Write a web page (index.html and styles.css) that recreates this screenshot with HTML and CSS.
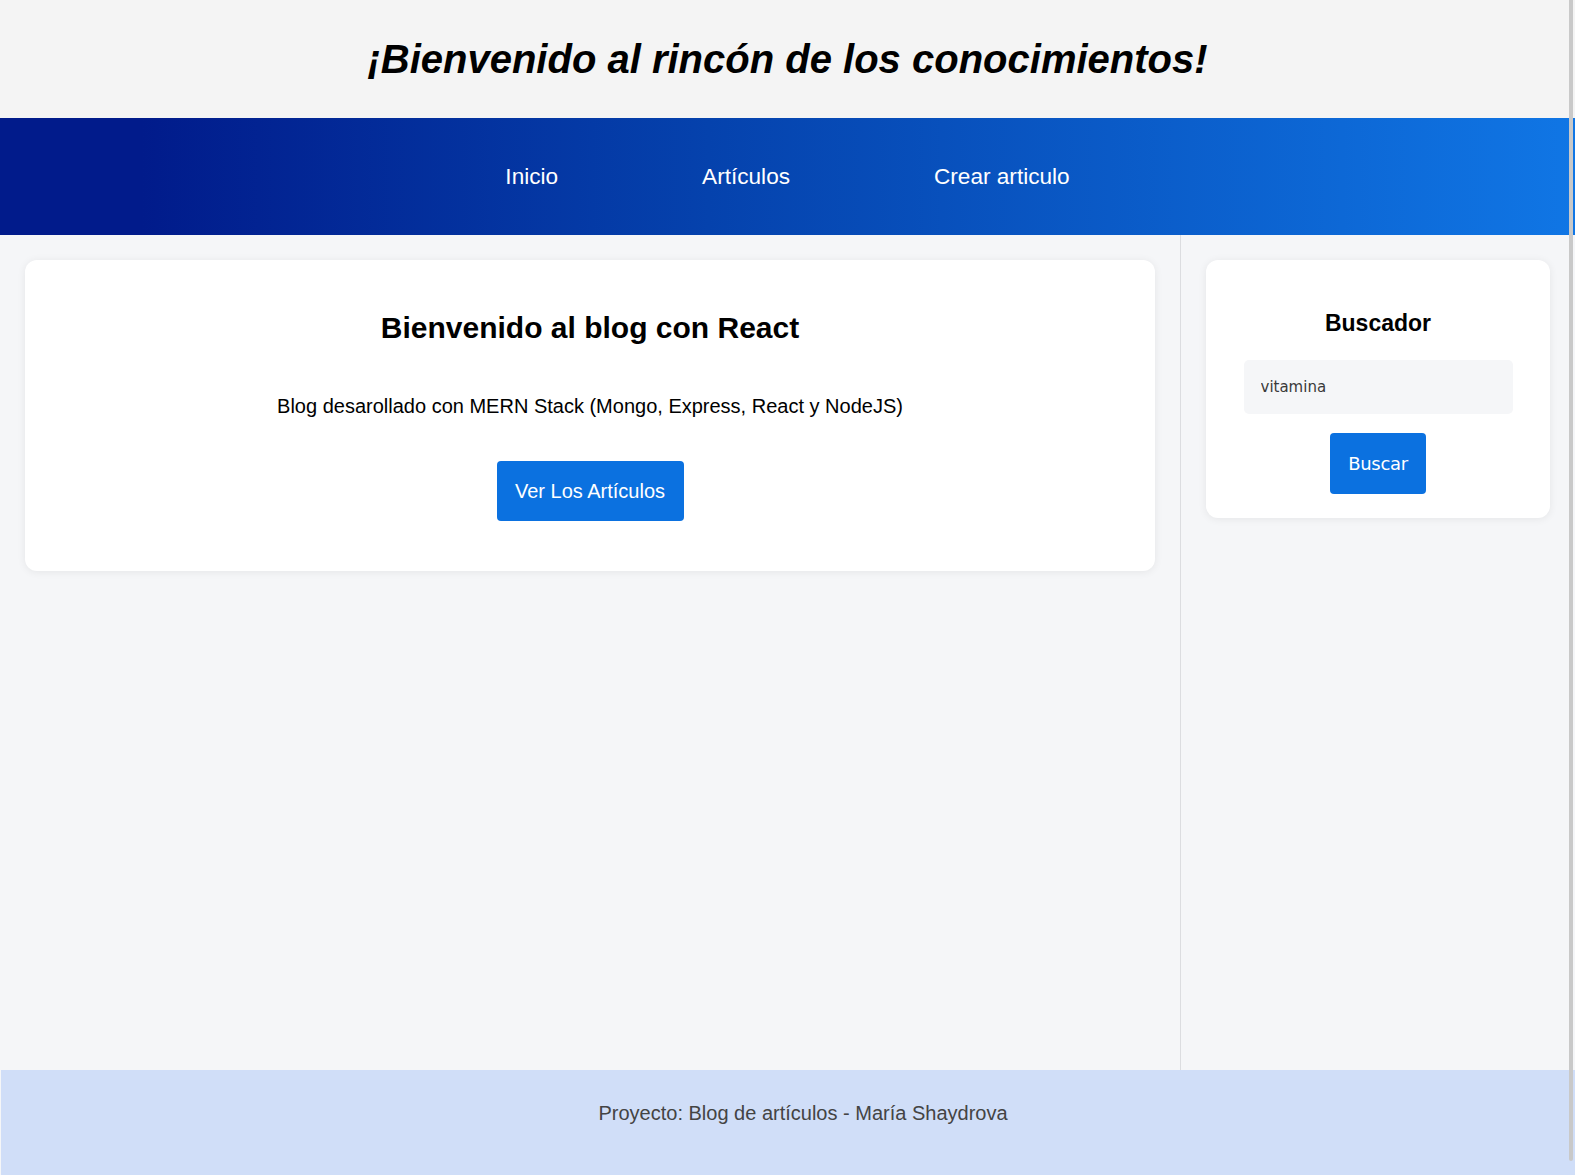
FILE: index.html
```html
<!DOCTYPE html>
<html lang="es">
<head>
<meta charset="utf-8">
<title>Blog</title>
<link rel="stylesheet" href="styles.css">
</head>
<body>
<div class="layout">
  <header class="header">
    <h1 class="site-title">¡Bienvenido al rincón de los conocimientos!</h1>
  </header>
  <nav class="nav">
    <ul class="nav-list">
      <li><a href="#" class="nav-link">Inicio</a></li>
      <li><a href="#" class="nav-link">Artículos</a></li>
      <li><a href="#" class="nav-link">Crear articulo</a></li>
    </ul>
  </nav>
  <div class="content-wrap">
    <main class="content">
      <section class="card jumbo">
        <h2 class="jumbo-title">Bienvenido al blog con React</h2>
        <p class="jumbo-text">Blog desarollado con MERN Stack (Mongo, Express, React y NodeJS)</p>
        <a href="#" class="btn btn-main">Ver Los Artículos</a>
      </section>
    </main>
    <aside class="sidebar">
      <section class="card search">
        <h3 class="search-title">Buscador</h3>
        <form class="search-form">
          <input type="text" class="search-input" value="vitamina">
          <button type="button" class="btn btn-search">Buscar</button>
        </form>
      </section>
    </aside>
  </div>
  <footer class="footer">
    <p class="footer-text">Proyecto: Blog de artículos - María Shaydrova</p>
  </footer>
</div>
<div class="scroll-thumb"></div>
</body>
</html>
```

FILE: styles.css
```css
* { box-sizing: border-box; }
html, body {
  margin: 0;
  padding: 0;
  height: 1175px;
  overflow: hidden;
}
body {
  font-family: "Liberation Sans", Arial, sans-serif;
  background: #f5f6f8;
  color: #000;
}
.layout {
  display: flex;
  flex-direction: column;
  height: 1175px;
}
.header {
  height: 118px;
  background: #f4f4f4;
  display: flex;
  align-items: center;
  justify-content: center;
}
.site-title {
  margin: 0;
  font-size: 40px;
  font-style: italic;
  font-weight: bold;
  padding-top: 1px;
}
.nav {
  height: 117px;
  background: linear-gradient(90deg, #011b8b 9%, #0542ad 45%, #1076e5 100%);
  display: flex;
  align-items: center;
  justify-content: center;
}
.nav-list {
  list-style: none;
  margin: 0;
  padding: 0;
  display: flex;
  gap: 144px;
}
.nav-link {
  color: #fff;
  text-decoration: none;
  font-size: 22.6px;
}
.content-wrap {
  flex: 1;
  display: flex;
}
.content {
  width: 1180px;
  padding: 25px;
}
.sidebar {
  flex: 1;
  border-left: 1px solid #dcdde0;
  padding: 25px;
}
.card {
  background: #fff;
  border-radius: 12px;
  box-shadow: 0 1px 8px rgba(0, 0, 0, 0.07);
}
.jumbo {
  height: 311px;
  display: flex;
  flex-direction: column;
  align-items: center;
  padding-top: 51px;
}
.jumbo-title {
  margin: 0;
  font-size: 30px;
  font-weight: bold;
}
.jumbo-text {
  margin: 50px 0 0 0;
  font-size: 20px;
}
.btn {
  background: #0b71e0;
  color: #fff;
  border: none;
  border-radius: 4px;
  text-decoration: none;
  display: flex;
  align-items: center;
  justify-content: center;
}
.btn-main {
  margin-top: 43px;
  width: 187px;
  height: 60px;
  font-size: 20px;
}
.search {
  height: 258px;
  display: flex;
  flex-direction: column;
  align-items: center;
  padding-top: 50px;
}
.search-title {
  margin: 0;
  font-size: 23px;
  font-weight: bold;
}
.search-form {
  margin-top: 23px;
  display: flex;
  flex-direction: column;
  align-items: center;
  gap: 19px;
}
.search-input {
  width: 269px;
  height: 54px;
  background: #f5f6f8;
  border: none;
  border-radius: 5px;
  padding: 0 17px;
  font-family: "DejaVu Sans", sans-serif;
  font-size: 15px;
  color: #3a3a3a;
  outline: none;
}
.btn-search {
  width: 96px;
  height: 61px;
  font-family: "DejaVu Sans", sans-serif;
  font-size: 18px;
  letter-spacing: -0.3px;
  padding: 0;
}
.footer {
  height: 105px;
  margin-left: 1px;
  background: #d0def8;
  display: flex;
  justify-content: center;
  padding: 32px 0 0 30px;
}
.footer-text {
  margin: 0;
  font-size: 20px;
  color: #444;
}
.scroll-thumb {
  position: fixed;
  top: 0;
  right: 2px;
  width: 4px;
  height: 1161px;
  background: #c9c9c9;
  border-radius: 0 0 2px 2px;
}
```
